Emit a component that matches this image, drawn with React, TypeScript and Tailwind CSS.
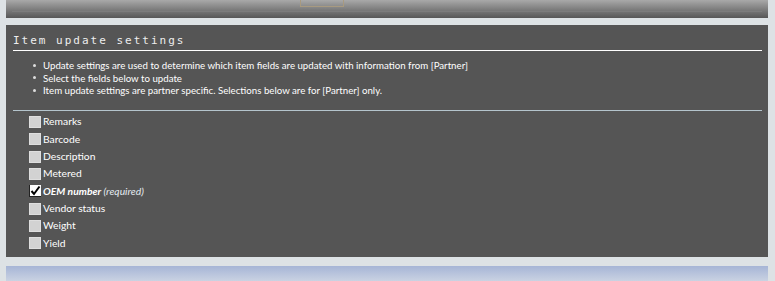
export default function App() {
  const fields = [
    { label: "Remarks" },
    { label: "Barcode" },
    { label: "Description" },
    { label: "Metered" },
    { label: "OEM number", checked: true, required: true },
    { label: "Vendor status" },
    { label: "Weight" },
    { label: "Yield" },
  ];

  return (
    <div className="w-[775px] h-[281px] overflow-hidden bg-[#dde2e5] pl-[6px] pr-[7px] flex flex-col" style={{ fontFamily: "Lato, 'Noto Sans', sans-serif" }}>
      {/* top bar */}
      <div className="h-[18px] shrink-0 bg-gradient-to-b from-[#a9a9a9] to-[#575757] flex flex-col">
        <div className="h-[11px] flex">
          <div className="ml-[294px] w-[44px] h-[7px] border-x border-b border-[#a89a80]" />
        </div>
        <div className="mx-[6px] h-px bg-[#7c7c7c]" />
      </div>

      {/* settings panel */}
      <div className="mt-[7px] h-[232px] shrink-0 bg-[#555555] pl-[7px] pr-[6px] text-white">
        <div className="h-[26px] pt-[9px] border-b border-white">
          <h2 className="text-[11px] leading-[13px] tracking-[2px] text-[#eeeeee]" style={{ fontFamily: "'DejaVu Sans Mono', monospace" }}>
            Item update settings
          </h2>
        </div>

        <ul className="mt-[8px] text-[9.7px] leading-[12.5px]">
          <li className="flex items-center">
            <span className="ml-[20px] mr-[7px] w-[3px] h-[3px] rounded-full bg-[#dddddd]" />
            Update settings are used to determine which item fields are updated with information from [Partner]
          </li>
          <li className="flex items-center">
            <span className="ml-[20px] mr-[7px] w-[3px] h-[3px] rounded-full bg-[#dddddd]" />
            Select the fields below to update
          </li>
          <li className="flex items-center">
            <span className="ml-[20px] mr-[7px] w-[3px] h-[3px] rounded-full bg-[#dddddd]" />
            Item update settings are partner specific. Selections below are for [Partner] only.
          </li>
        </ul>

        <div className="mt-[13px] h-px bg-[#b4c4cc]" />

        <div className="pt-[3px]">
          {fields.map((f) => (
            <div key={f.label} className="h-[17.3px] flex items-center text-[10.3px]">
              {f.checked ? (
                <span className="ml-[16px] w-[12px] h-[12px] bg-white border-l border-b border-[#222] flex items-center justify-center">
                  <svg width="11" height="11" viewBox="0 0 11 11">
                    <path d="M1.5 6 L4 9 L9.5 1.5" fill="none" stroke="#000" strokeWidth="2" />
                  </svg>
                </span>
              ) : (
                <span className="ml-[16px] w-[12px] h-[12px] bg-[#d2d2d2] border border-[#dedede]" />
              )}
              <span className="ml-[2px]">
                {f.required ? (
                  <span className="italic">
                    <span className="font-bold">{f.label}</span>{" "}
                    <span className="text-[#e4eaf0]">(required)</span>
                  </span>
                ) : (
                  f.label
                )}
              </span>
            </div>
          ))}
        </div>
      </div>

      {/* lower panel */}
      <div className="mt-[9px] h-[20px] shrink-0 bg-gradient-to-b from-[#a6b5d6] to-[#d6dce6]" />
    </div>
  );
}
